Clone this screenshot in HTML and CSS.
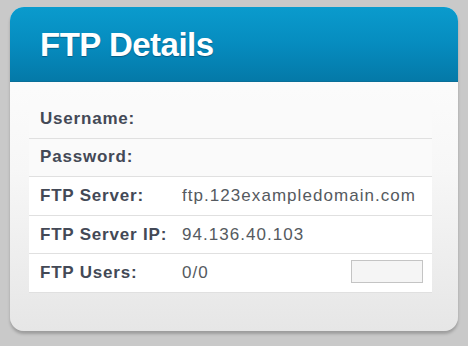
FILE: index.html
```html
<!DOCTYPE html>
<html>
<head>
<meta charset="utf-8">
<link rel="stylesheet" href="styles.css">
</head>
<body>
<div class="card">
  <div class="card-header"><h1 class="title">FTP Details</h1></div>
  <div class="card-body">
    <div class="rows">
      <div class="row"><span class="label">Username:</span><span class="value"></span></div>
      <div class="row"><span class="label">Password:</span><span class="value"></span></div>
      <div class="row"><span class="label">FTP Server:</span><span class="value">ftp.123exampledomain.com</span></div>
      <div class="row"><span class="label">FTP Server IP:</span><span class="value">94.136.40.103</span></div>
      <div class="row"><span class="label">FTP Users:</span><span class="value">0/0</span><span class="box"></span></div>
    </div>
  </div>
</div>
</body>
</html>
```

FILE: styles.css
```css
html, body {
  margin: 0;
  padding: 0;
  background: #c9c9c9;
  width: 468px;
  height: 346px;
  overflow: hidden;
}
body {
  padding-top: 7px;
  box-sizing: border-box;
  font-family: "Liberation Sans", Arial, sans-serif;
}
.card {
  margin-left: 10px;
  width: 448px;
  height: 324px;
  border-radius: 14px;
  background: linear-gradient(to bottom, #ffffff 0%, #f7f7f7 50%, #e6e6e6 100%);
  box-shadow: 0 3px 3px rgba(0,0,0,0.22);
  overflow: hidden;
  display: flex;
  flex-direction: column;
}
.card-header {
  height: 75px;
  background: linear-gradient(to bottom, #0a9bcd 0%, #068cbf 50%, #0479a8 100%);
  border-bottom: 1px solid #0a6f98;
  box-sizing: border-box;
  display: flex;
  align-items: center;
  padding-left: 30px;
}
.title {
  margin: 0;
  padding-top: 2px;
  color: #fff;
  font-family: "Liberation Sans", Arial, sans-serif;
  font-weight: bold;
  font-size: 33px;
  letter-spacing: -0.5px;
  text-shadow: 0 1px 1px rgba(0,40,70,0.45);
}
.card-body {
  padding: 18px 26px 0 19px;
}
.rows {
  display: flex;
  flex-direction: column;
}
.row {
  height: 38.6px;
  box-sizing: border-box;
  border-bottom: 1px solid #e0e0e0;
  background: #fff;
  display: flex;
  align-items: center;
  padding-left: 11px;
  padding-right: 9px;
}
.row:nth-child(-n+2) {
  background: #fafafa;
}
.label {
  width: 142px;
  flex: none;
  font-weight: bold;
  font-size: 17px;
  letter-spacing: 0.8px;
  color: #434956;
}
.value {
  flex: 1;
  font-size: 17px;
  letter-spacing: 1.05px;
  color: #555a60;
}
.box {
  width: 72px;
  height: 23px;
  box-sizing: border-box;
  border: 1px solid #c4c4c4;
  background: #f5f5f5;
  margin-top: -3px;
}
```
